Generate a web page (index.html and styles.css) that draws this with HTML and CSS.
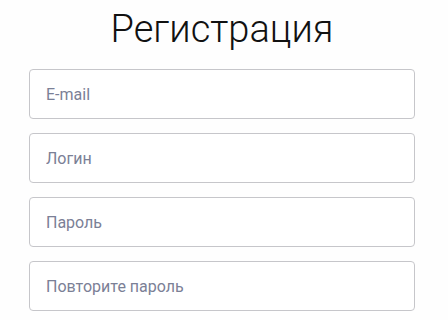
FILE: index.html
```html
<!DOCTYPE html>
<html lang="ru">
<head>
    <meta charset="UTF-8">
    <meta name="viewport" content="width=device-width, initial-scale=1.0">
    <title>Регистрация</title>
    <link rel="stylesheet" href="styles.css">
</head>
<body>
    <div class="container">
        <h1>Регистрация</h1>
        <form id="registerForm" class="form">
            <input type="email" name="email" placeholder="E-mail">
            <input type="text" name="login" placeholder="Логин">
            <input type="password" name="password" placeholder="Пароль">
            <input type="password" name="password_repeat" placeholder="Повторите пароль">
        </form>
    </div>
</body>
</html>
```

FILE: styles.css
```css
body {
    font-family: 'Roboto', 'Liberation Sans', sans-serif;
    background-color: #fefefe;
    margin: 0;
}

.container {
    width: 386px;
    padding: 5px 0 0 29px;
}

h1 {
    margin: 0 0 16px;
    text-align: center;
    color: #111;
    font-size: 38px;
    font-weight: 300;
    line-height: 48px;
}

.form {
    display: flex;
    flex-direction: column;
    gap: 14px;
}

input {
    width: 100%;
    height: 50px;
    box-sizing: border-box;
    padding: 0 16px;
    border: 1px solid #c6c6ca;
    border-radius: 4px;
    background: #fff;
    font-family: inherit;
    font-size: 16px;
    color: #333;
}

input::placeholder {
    color: #7b8096;
}

input:focus {
    border-color: #8a8fa5;
    outline: none;
}
```
